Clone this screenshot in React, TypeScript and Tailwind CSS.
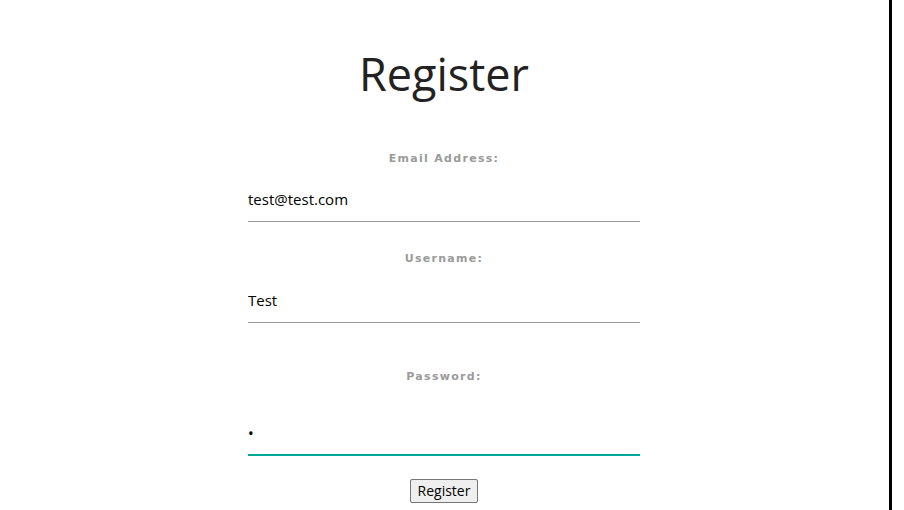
export default function App() {
  return (
    <div className="flex h-[510px] w-[904px] bg-white">
      <div className="flex flex-1 flex-col items-center pt-[44px] pr-[1px]">
        <h1 className="text-[45px] leading-[60px] font-normal text-[#222]" style={{ fontFamily: '"Open Sans", sans-serif' }}>
          Register
        </h1>
        <form className="mt-[47px] flex w-[392px] flex-col" onSubmit={(e) => e.preventDefault()}>
          <Field label="Email Address:" value="test@test.com" type="text" tall={false} />
          <div className="h-[29px]" />
          <Field label="Username:" value="Test" type="text" tall />
          <div className="h-[46px]" />
          <label className="block text-center text-[11px] font-bold tracking-[1.3px] text-[#9a9a9a]" style={{ fontFamily: '"DejaVu Sans", Verdana, sans-serif' }}>
            Password:
          </label>
          <div className="flex h-[70px] items-end border-b-2 border-[#00a896] pb-[13px]">
            <span className="text-[15px] leading-none text-black">•</span>
          </div>
          <div className="mt-[23px] flex justify-center">
            <button
              type="submit"
              className="h-[24px] rounded-[2px] border border-[#767676] bg-[#efefef] px-[7px] text-[14px] leading-none text-black"
              style={{ fontFamily: '"Open Sans", sans-serif' }}
            >
              Register
            </button>
          </div>
        </form>
      </div>
      <div className="mr-[12px] w-[3px] bg-black" />
    </div>
  )
}

function Field({ label, value, type, tall }: { label: string; value: string; type: string; tall: boolean }) {
  return (
    <div className="flex flex-col">
      <label className="block text-center text-[11px] font-bold tracking-[1.3px] text-[#9a9a9a]" style={{ fontFamily: '"DejaVu Sans", Verdana, sans-serif' }}>
        {label}
      </label>
      <input
        type={type}
        defaultValue={value}
        className={`mt-[10px] ${tall ? 'h-[46px]' : 'h-[44px]'} border-b border-[#999] bg-transparent text-[15px] text-black outline-none`}
        style={{ fontFamily: '"Open Sans", sans-serif' }}
      />
    </div>
  )
}
